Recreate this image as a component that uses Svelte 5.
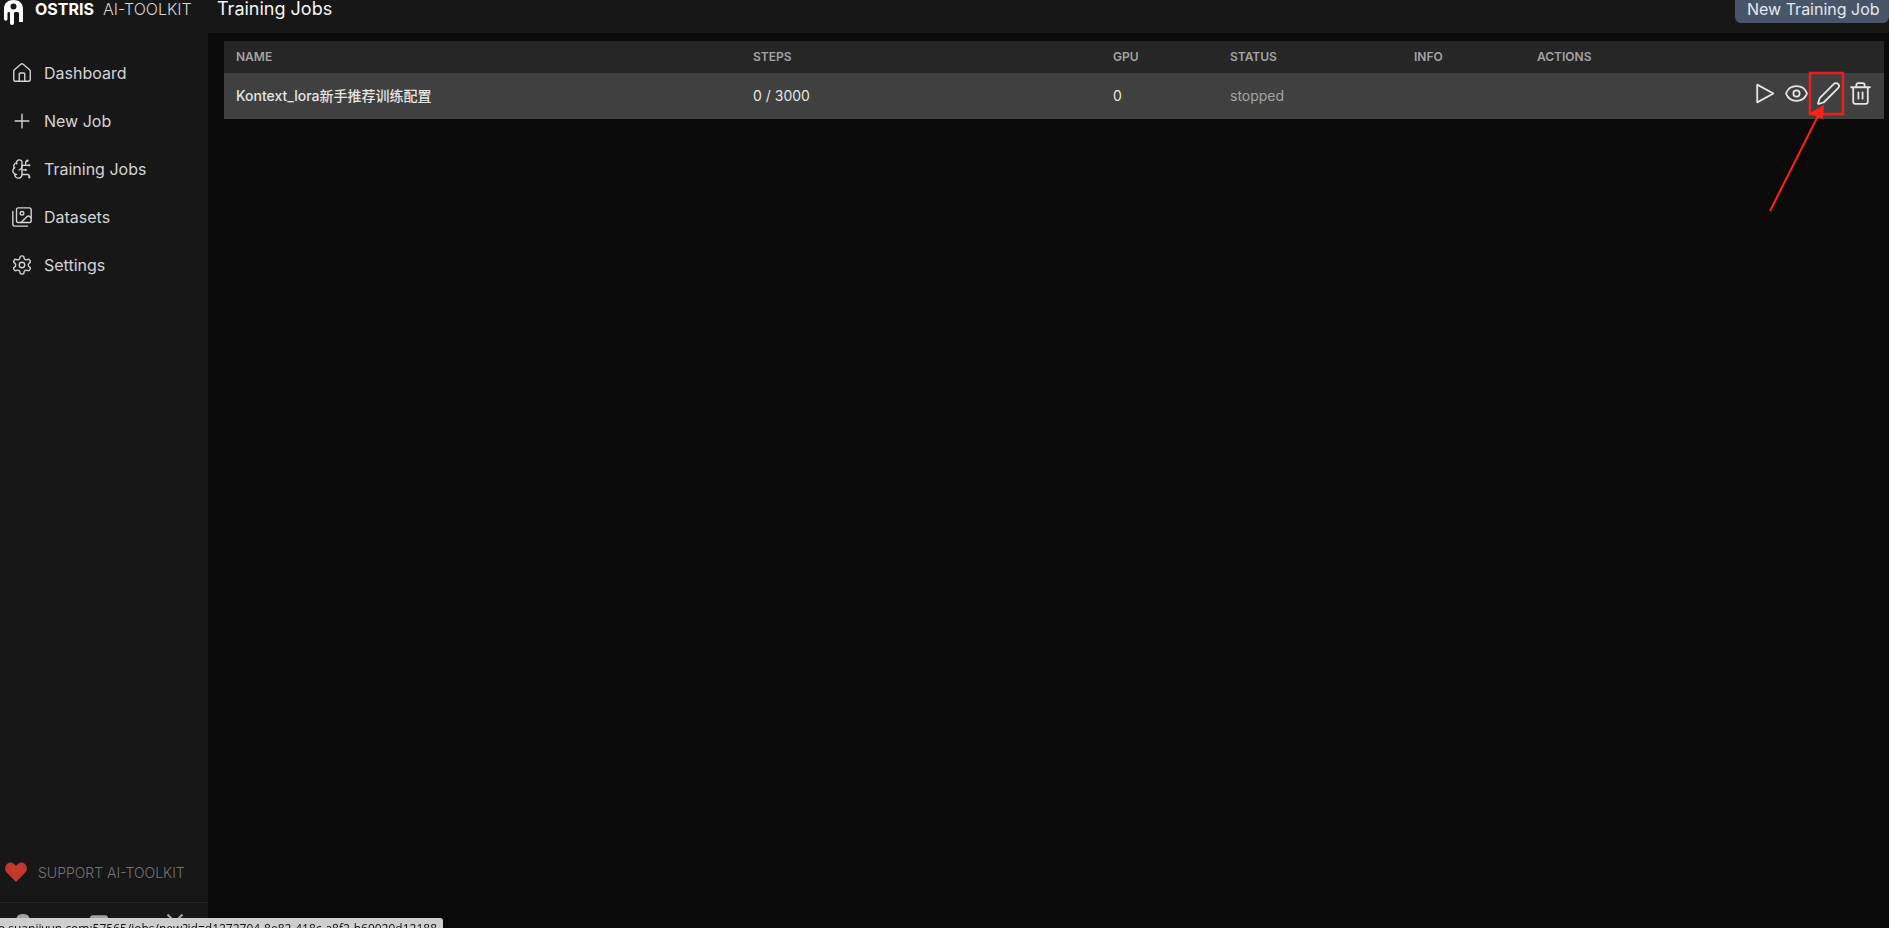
<script>
  const nav = ['Dashboard', 'New Job', 'Training Jobs', 'Datasets', 'Settings'];
</script>

{#snippet icon(name)}
  <svg class="ico" viewBox="0 0 24 24" fill="none" stroke="currentColor" stroke-width="1.5" stroke-linecap="round" stroke-linejoin="round">
    {#if name === 'Dashboard'}
      <path d="M15 21v-8a1 1 0 0 0-1-1h-4a1 1 0 0 0-1 1v8" />
      <path d="M3 10a2 2 0 0 1 .709-1.528l7-5.999a2 2 0 0 1 2.582 0l7 5.999A2 2 0 0 1 21 10v9a2 2 0 0 1-2 2H5a2 2 0 0 1-2-2z" />
    {:else if name === 'New Job'}
      <path d="M12 4.5v15m7.5-7.5h-15" />
    {:else if name === 'Training Jobs'}
      <path d="M12 5a3 3 0 1 0-5.997.125 4 4 0 0 0-2.526 5.77 4 4 0 0 0 .556 6.588A4 4 0 1 0 12 18Z" />
      <path d="M9 13a4.5 4.5 0 0 0 3-4M6.003 5.125A3 3 0 0 0 6.401 6.5M3.477 10.896a4 4 0 0 1 .585-.396M6 18a4 4 0 0 1-1.967-.516M12 13h4M12 18h6a2 2 0 0 1 2 2v1M12 8h8M16 8V5a2 2 0 0 1 2-2" />
      <circle cx="16" cy="13" r=".5" /><circle cx="18" cy="3" r=".5" /><circle cx="20" cy="21" r=".5" /><circle cx="20" cy="8" r=".5" />
    {:else if name === 'Datasets'}
      <path d="M18 22H4a2 2 0 0 1-2-2V6" />
      <path d="m22 13-1.296-1.296a2.41 2.41 0 0 0-3.408 0L11 18" />
      <circle cx="12" cy="8" r="2" />
      <rect width="16" height="16" x="6" y="2" rx="2" />
    {:else if name === 'Settings'}
      <path d="M12.22 2h-.44a2 2 0 0 0-2 2v.18a2 2 0 0 1-1 1.73l-.43.25a2 2 0 0 1-2 0l-.15-.08a2 2 0 0 0-2.73.73l-.22.38a2 2 0 0 0 .73 2.73l.15.1a2 2 0 0 1 1 1.72v.51a2 2 0 0 1-1 1.74l-.15.09a2 2 0 0 0-.73 2.73l.22.38a2 2 0 0 0 2.73.73l.15-.08a2 2 0 0 1 2 0l.43.25a2 2 0 0 1 1 1.73V20a2 2 0 0 0 2 2h.44a2 2 0 0 0 2-2v-.18a2 2 0 0 1 1-1.73l.43-.25a2 2 0 0 1 2 0l.15.08a2 2 0 0 0 2.73-.73l.22-.39a2 2 0 0 0-.73-2.73l-.15-.08a2 2 0 0 1-1-1.74v-.5a2 2 0 0 1 1-1.74l.15-.09a2 2 0 0 0 .73-2.73l-.22-.38a2 2 0 0 0-2.73-.73l-.15.08a2 2 0 0 1-2 0l-.43-.25a2 2 0 0 1-1-1.73V4a2 2 0 0 0-2-2z" />
      <circle cx="12" cy="12" r="3" />
    {:else if name === 'play'}
      <path d="M5 3.500v17L20.500 12z" />
    {:else if name === 'eye'}
      <path d="M2.062 12.348a1 1 0 0 1 0-.696 10.75 10.75 0 0 1 19.876 0 1 1 0 0 1 0 .696 10.75 10.75 0 0 1-19.876 0" />
      <circle cx="12" cy="12" r="3" />
    {:else if name === 'pen'}
      <path d="M21.174 6.812a1 1 0 0 0-3.986-3.987L3.842 16.174a2 2 0 0 0-.5.83l-1.321 4.352a.5.5 0 0 0 .623.622l4.353-1.32a2 2 0 0 0 .83-.497z" />
    {:else if name === 'trash'}
      <path d="M3 6h18M19 6v14c0 1-1 2-2 2H7c-1 0-2-1-2-2V6M8 6V4c0-1 1-2 2-2h4c1 0 2 1 2 2v2M10 11v6M14 11v6" />
    {/if}
  </svg>
{/snippet}

<div class="app">
  <aside class="sidebar">
    <div class="brand">
      <svg class="logo" viewBox="0 0 19 25" fill="#fff">
        <path fill-rule="evenodd" d="M9.500 0C4 0 0 3 0 9V19a1.750 1.750 0 0 0 3.500 0V13c0-1.500 2.500-1.500 2.500 0V23a2 2 0 0 0 4 0V13c0-1.500 5-1.500 5 0V22h4V9C19 3 15 0 9.500 0Zm0 3.500a3 3 0 1 1 0 6 3 3 0 0 1 0-6Z" />
      </svg>
      <span class="brand-name">OSTRIS</span>
      <span class="brand-sub">AI-TOOLKIT</span>
    </div>
    <nav class="nav">
      {#each nav as item}
        <a class="nav-item" href="#top">
          {@render icon(item)}
          <span>{item}</span>
        </a>
      {/each}
    </nav>
    <a class="support" href="#top">
      <svg class="heart" viewBox="0 0 24 22" fill="#c0392b"><path d="M12 22 1.800 11.500C-.6 9-.6 5 1.800 2.500c2.400-2.500 6-2.500 8.400 0L12 4.300l1.800-1.800c2.400-2.500 6-2.500 8.400 0 2.400 2.500 2.400 6.500 0 9z" /></svg>
      <span>SUPPORT AI-TOOLKIT</span>
    </a>
    <div class="socials">
      <svg viewBox="0 0 24 24" fill="#a3a3a3"><path d="M6 4c4-2 8-2 12 0 3 4 4 9 4 14-2 2-4 3-6 3l-1-2H9l-1 2c-2 0-4-1-6-3 0-5 1-10 4-14Z" /></svg>
      <svg viewBox="0 0 24 24" fill="#a3a3a3"><rect x="1" y="4" width="22" height="16" rx="4" /></svg>
      <svg viewBox="0 0 24 24" fill="none" stroke="#a3a3a3" stroke-width="2.500"><path d="M3 3l18 18M21 3 3 21" /></svg>
    </div>
  </aside>

  <div class="main">
    <header class="top">
      <h1>Training Jobs</h1>
      <button class="primary">New Training Job</button>
    </header>
    <section class="content">
      <table>
        <thead>
          <tr>
            <th class="c1">Name</th>
            <th class="c2">Steps</th>
            <th class="c3">GPU</th>
            <th class="c4">Status</th>
            <th class="c5">Info</th>
            <th>Actions</th>
          </tr>
        </thead>
        <tbody>
          <tr>
            <td class="name">Kontext_lora新手推荐训练配置</td>
            <td>0 / 3000</td>
            <td>0</td>
            <td class="status">stopped</td>
            <td></td>
            <td class="actions">
              <div class="action-row">
                <button class="act">{@render icon('play')}</button>
                <button class="act">{@render icon('eye')}</button>
                <button class="act">{@render icon('pen')}</button>
                <button class="act">{@render icon('trash')}</button>
              </div>
            </td>
          </tr>
        </tbody>
      </table>
    </section>
  </div>
</div>

<svg class="annotation" viewBox="0 0 1889 928" fill="none">
  <rect x="1810" y="73" width="33" height="41" stroke="#ee1c1c" stroke-width="2.500" />
  <path d="M1770 211 1819 114" stroke="#ff2018" stroke-width="2" />
  <path d="M1824 105 1823 119 1817 117 1810 113Z" fill="#ff2018" />
</svg>

<div class="status-bubble">
  <span>o.suanjiyun.com:57565/jobs/new?id=d1272704-8e82-418c-a8f2-b60029d12188</span>
</div>

<style>
  :global(body) {
    margin: 0;
    overflow: hidden;
    background: #0a0a0a;
    font-family: Inter, "Noto Sans CJK SC", sans-serif;
  }
  .app {
    display: flex;
    height: 943px;
    margin-top: -15px;
    color: #d4d4d4;
  }
  .sidebar {
    width: 208px;
    flex: none;
    display: flex;
    flex-direction: column;
    background: #171717;
  }
  .brand {
    height: 48px;
    display: flex;
    align-items: center;
    padding-left: 4px;
    flex: none;
  }
  .logo {
    width: 19px;
    height: 25px;
    flex: none;
    align-self: flex-start;
    margin-top: 15px;
  }
  .brand-name {
    margin-left: 12px;
    font-size: 16px;
    font-weight: 700;
    color: #fff;
    padding-bottom: 1px;
  }
  .brand-sub {
    margin-left: 9px;
    font-size: 16px;
    font-weight: 300;
    color: #d4d4d4;
    padding-bottom: 1px;
  }
  .nav {
    display: flex;
    flex-direction: column;
    padding-top: 16px;
  }
  .nav-item {
    height: 48px;
    display: flex;
    align-items: center;
    gap: 11px;
    padding-left: 11px;
    color: #d4d4d4;
    text-decoration: none;
    font-size: 16px;
  }
  .ico {
    width: 22px;
    height: 22px;
    flex: none;
    display: block;
  }
  .support {
    margin-top: auto;
    display: flex;
    align-items: center;
    gap: 11px;
    padding-left: 5px;
    height: 30px;
    color: #737373;
    text-decoration: none;
    font-size: 14px;
    font-weight: 300;
  }
  .heart {
    width: 22px;
    height: 20px;
    flex: none;
  }
  .socials {
    margin-top: 15px;
    border-top: 1px solid #262626;
    height: 26px;
    box-sizing: border-box;
    padding: 9px 23px 0 13px;
    display: flex;
    justify-content: space-between;
    overflow: hidden;
    flex: none;
  }
  .socials svg {
    width: 20px;
    height: 20px;
    flex: none;
  }
  .main {
    flex: 1;
    min-width: 0;
    display: flex;
    flex-direction: column;
  }
  .top {
    height: 48px;
    flex: none;
    display: flex;
    align-items: center;
    justify-content: space-between;
    background: #171717;
    padding-left: 9px;
  }
  h1 {
    margin: 0 0 2px;
    font-size: 18px;
    font-weight: 400;
    color: #f5f5f5;
  }
  .primary {
    width: 154px;
    height: 28px;
    box-sizing: border-box;
    background: #475569;
    color: #e2e8f0;
    border: 0;
    border-radius: 6px;
    font: 400 16px Inter, sans-serif;
    text-align: left;
    padding: 0 0 0 12px;
    white-space: nowrap;
  }
  .content {
    flex: 1;
    padding: 8px 5px 0 16px;
    background: #0a0a0a;
  }
  table {
    width: 100%;
    border-collapse: collapse;
    table-layout: fixed;
    font-size: 14px;
  }
  th {
    height: 32px;
    padding: 0 0 2px 12px;
    box-sizing: border-box;
    background: #262626;
    text-align: left;
    text-transform: uppercase;
    font-size: 12px;
    font-weight: 600;
    color: #a3a3a3;
  }
  .c1 { width: 517px; }
  .c2 { width: 360px; }
  .c3 { width: 117px; }
  .c4 { width: 184px; }
  .c5 { width: 123px; }
  td {
    height: 46px;
    padding: 0 0 0 12px;
    box-sizing: border-box;
    background: #404040;
    color: #e5e5e5;
    line-height: 20px;
    white-space: nowrap;
  }
  .name { font-weight: 500; }
  .status { color: #a3a3a3; }
  .action-row {
    display: flex;
    justify-content: flex-end;
    padding-right: 8px;
    padding-bottom: 6px;
  }
  .act {
    width: 32px;
    height: 32px;
    padding: 0;
    border: 0;
    background: none;
    color: #e5e5e5;
    display: flex;
    align-items: center;
    justify-content: center;
  }
  .act .ico {
    width: 25px;
    height: 25px;
    stroke-width: 1.700;
  }
  .annotation {
    position: fixed;
    inset: 0;
    width: 1889px;
    height: 928px;
    pointer-events: none;
  }
  .status-bubble {
    position: fixed;
    left: 0;
    bottom: 0;
    width: 443px;
    height: 10px;
    box-sizing: border-box;
    background: #cecece;
    border-top-right-radius: 3px;
    color: #111;
    font: 400 12px "Open Sans", "Liberation Sans", sans-serif;
    line-height: 21px;
    overflow: hidden;
    display: flex;
    justify-content: flex-end;
    padding-right: 6px;
    white-space: nowrap;
  }
</style>
